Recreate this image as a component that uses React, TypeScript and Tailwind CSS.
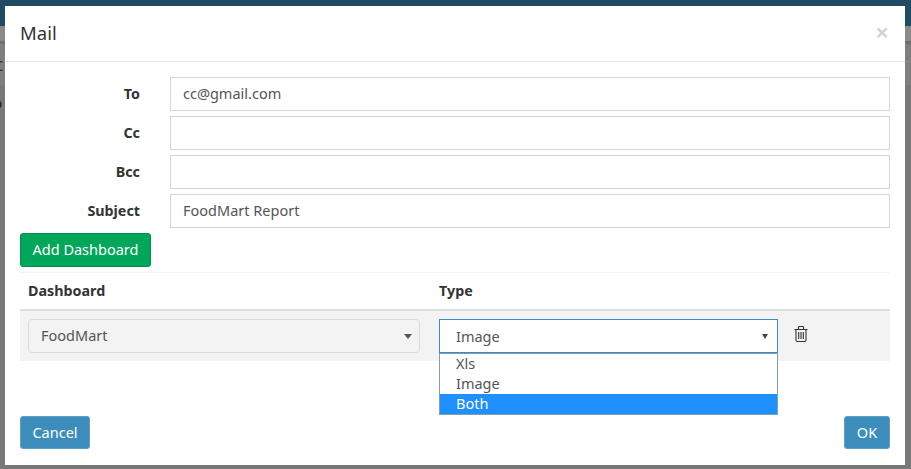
const inputCls = "h-[34px] flex-1 border border-[#d2d6de] px-3 text-[14.5px] text-[#555] flex items-center";

function Row({ label, value }: { label: string; value?: string }) {
  return (
    <div className="flex items-center">
      <label className="w-[120px] text-right text-[14.3px] font-bold text-[#333]">{label}</label>
      <div className="w-[30px]" />
      <div className={inputCls}>{value}</div>
    </div>
  );
}

function TrashIcon() {
  return (
    <svg viewBox="0 0 14 16" className="ml-4 h-4 w-[14px] -translate-y-[2px]" fill="none" stroke="#333" strokeWidth="1.1">
      <path d="M0.5 3.5h13M2 3.5v10.5a1.5 1.5 0 0 0 1.5 1.5h7a1.5 1.5 0 0 0 1.5-1.5V3.5M4.5 3.5V1.2a.7.7 0 0 1 .7-.7h3.6a.7.7 0 0 1 .7.7v2.3M4.7 6v7M7 6v7M9.3 6v7" />
    </svg>
  );
}

export default function App() {
  return (
    <div className="relative h-[469px] w-[911px] overflow-hidden bg-[#787878] font-['Noto_Sans',sans-serif]">
      {/* page behind the backdrop */}
      <div className="absolute inset-x-0 top-0 h-[26px] bg-[#1f4a63]" />
      <div className="absolute inset-x-0 top-[26px] h-[15px] bg-[#8a8a8a]" />
      <div className="absolute inset-x-0 top-[41px] h-[3px] bg-[#707070]" />
      <div className="absolute inset-x-0 top-[44px] h-[41px] bg-[#7f7f7f]" />
      <div className="absolute inset-x-0 top-[61px] h-px bg-[#8c8c8c]" />
      <span className="absolute -left-[6px] top-[54px] text-[15px] text-[#2e2e2e]">C</span>
      <span className="absolute -left-[8px] top-[90px] text-[17px] text-[#222]">o</span>

      <div className="relative ml-[5px] mt-[6px] h-[459px] w-[900px] bg-white">
        <div className="flex h-[56px] items-center justify-between border-b border-[#e5e5e5] px-[15px]">
          <h4 className="-translate-y-px text-[18.5px] text-[#333]">Mail</h4>
          <span className="mr-px -translate-y-[2px] text-[24px] font-bold leading-none text-[#d4d4d4]">×</span>
        </div>
        <div className="px-[15px] pt-[15px]">
          <div className="flex flex-col gap-[5px]">
            <Row label="To" value="cc@gmail.com" />
            <Row label="Cc" />
            <Row label="Bcc" />
            <Row label="Subject" value="FoodMart Report" />
          </div>
          <button className="mt-[5px] block h-[34px] w-[131px] rounded-[3px] border border-[#008d4c] bg-[#00a65a] text-[14.5px] text-white">
            Add Dashboard
          </button>
          <div className="mt-[5px] border-t border-[#f4f4f4]">
            <div className="flex h-[38px] items-center border-b-2 border-[#ddd] text-[14.3px] font-bold text-[#333]">
              <div className="w-[419px] pl-2">Dashboard</div>
              <div>Type</div>
            </div>
            <div className="relative flex h-[50px] items-center bg-[#f3f3f3] pl-2">
              <div className="flex h-[34px] w-[392px] items-center justify-between rounded-[4px] border border-[#dcdcdc] bg-[#f3f3f3] pl-3 pr-[7px] text-[14.5px] text-[#555]">
                <span>FoodMart</span>
                <span className="h-0 w-0 border-x-4 border-t-[5px] border-x-transparent border-t-[#555]" />
              </div>
              <div className="ml-[19px] w-[339px]">
                <div className="flex h-[34px] items-center justify-between border border-[#3c8dbc] bg-white pl-4 pr-[9px] text-[14.5px] text-[#555]">
                  <span className="translate-y-px">Image</span>
                  <span className="h-0 w-0 border-x-[3px] border-t-[5px] border-x-transparent border-t-[#444]" />
                </div>
              </div>
              <TrashIcon />
              <div className="absolute left-[419px] top-[42px] w-[339px] border border-[#7f9db9] bg-white text-[14.5px] leading-[20px] text-[#555]">
                <div className="pl-4"><span className="block -translate-y-px">Xls</span></div>
                <div className="pl-4"><span className="block -translate-y-px">Image</span></div>
                <div className="bg-[#1e90ff] pl-4 text-white"><span className="block -translate-y-px">Both</span></div>
              </div>
            </div>
          </div>
          <div className="mt-[55px] flex justify-between">
            <button className="h-[33px] w-[70px] rounded-[3px] border border-[#5a9fc7] bg-[#3c8dbc] text-[14.5px] text-white">Cancel</button>
            <button className="h-[33px] w-[46px] rounded-[3px] border border-[#5a9fc7] bg-[#3c8dbc] text-[14.5px] text-white">OK</button>
          </div>
        </div>
      </div>
    </div>
  );
}
